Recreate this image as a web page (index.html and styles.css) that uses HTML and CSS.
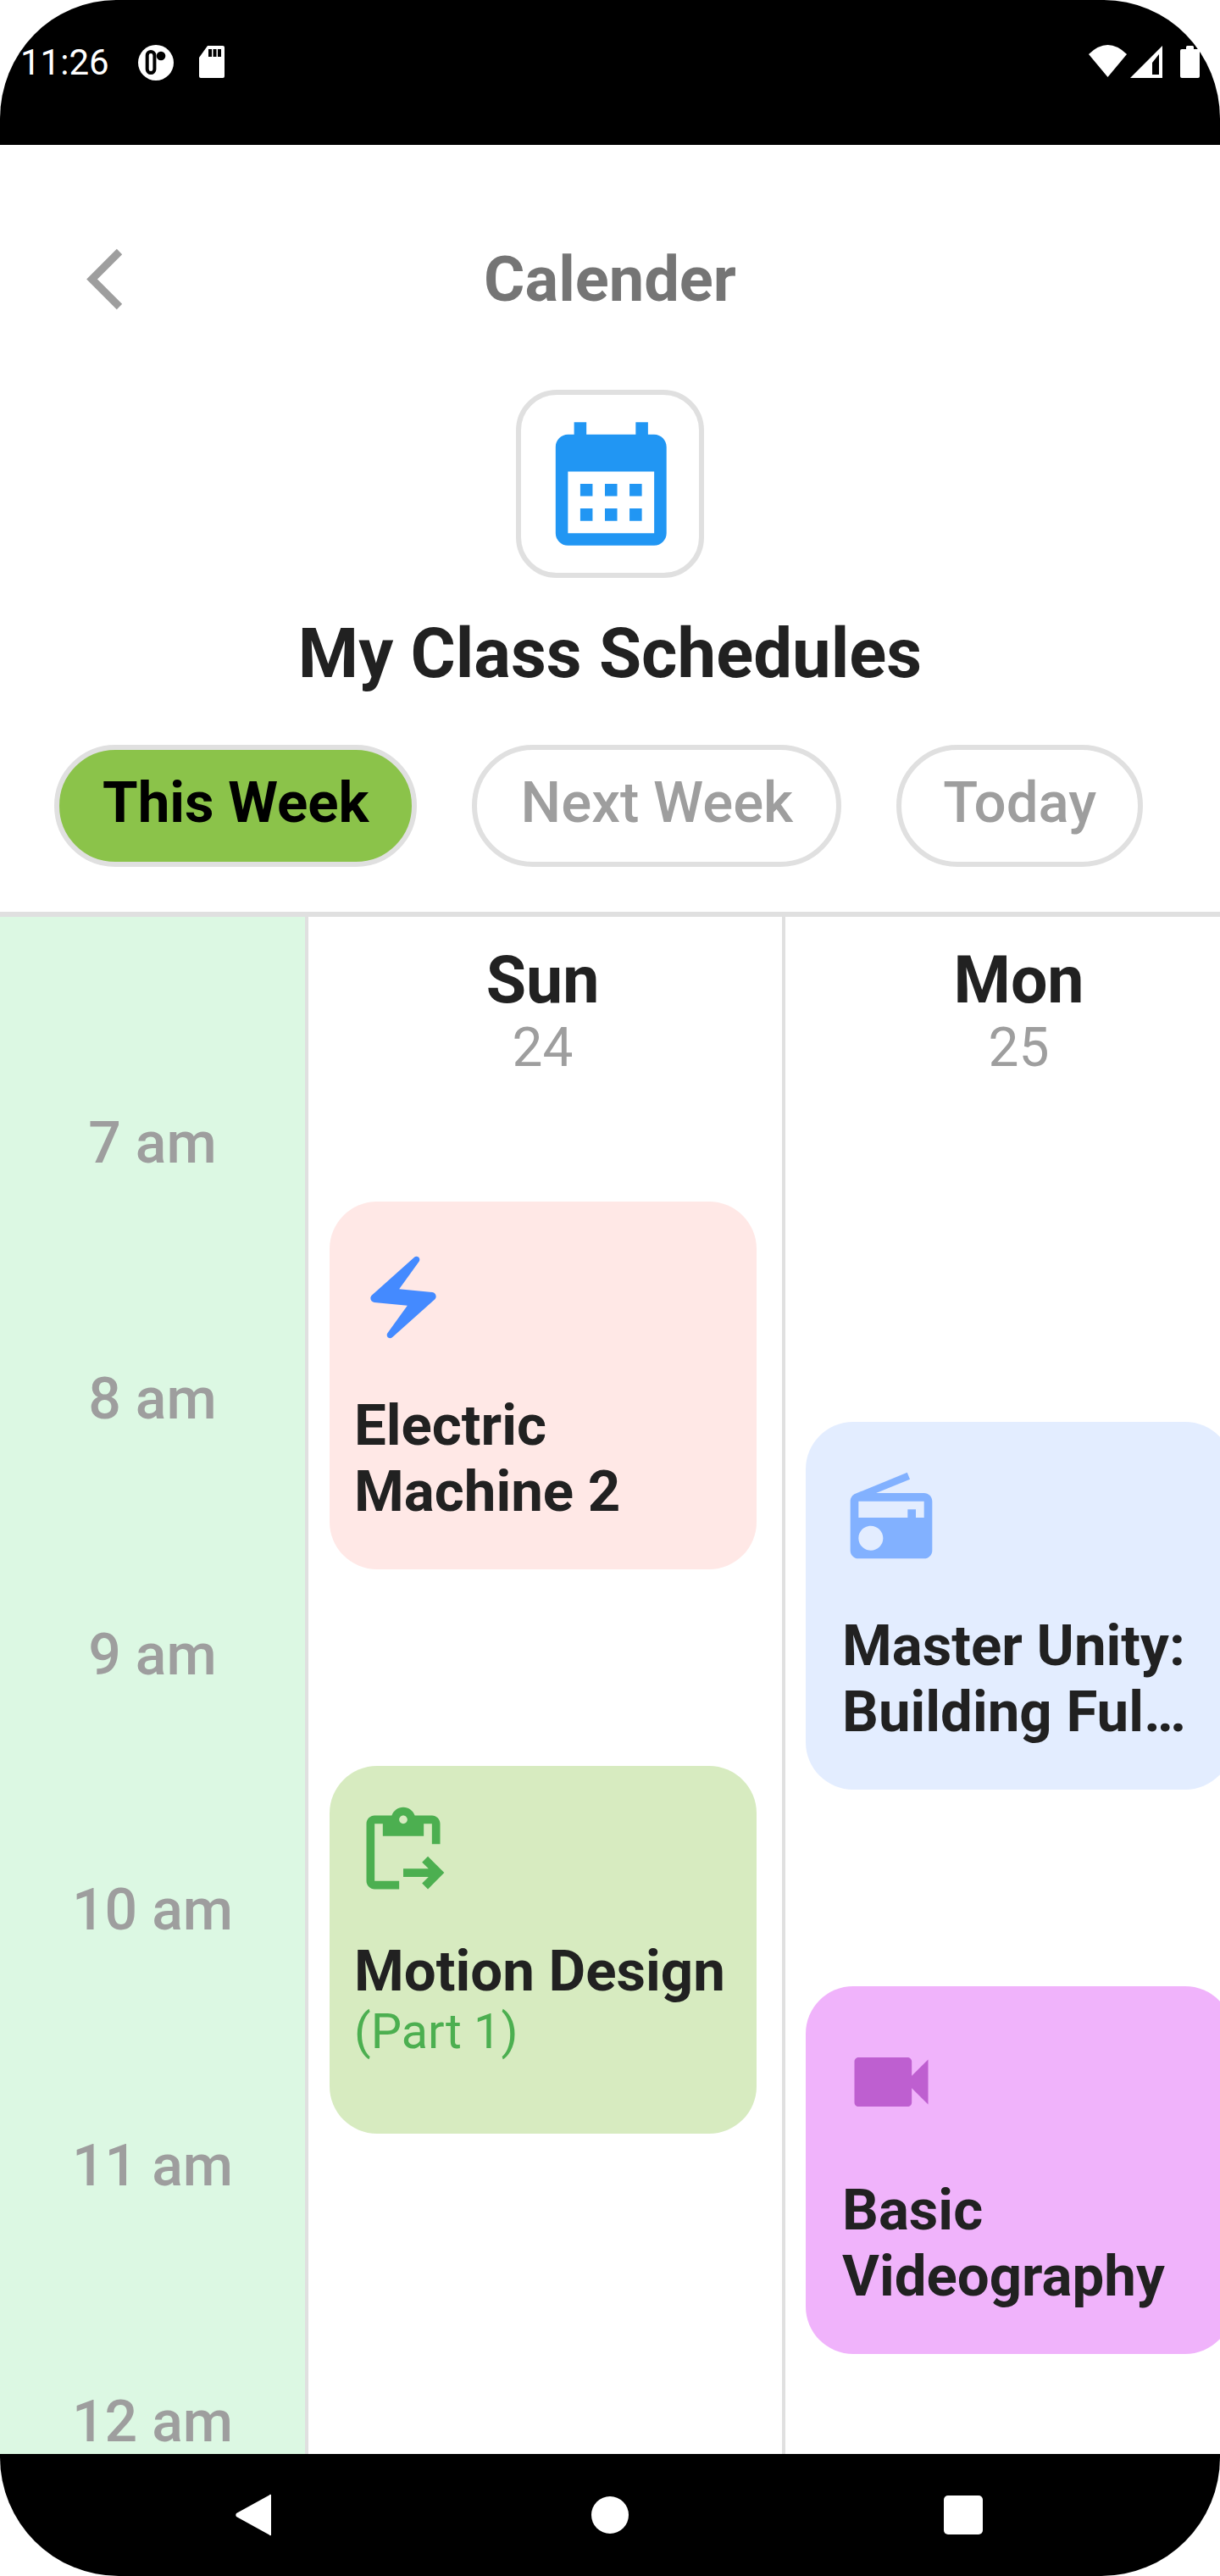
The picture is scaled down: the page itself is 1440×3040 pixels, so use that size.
FILE: index.html
```html
<!DOCTYPE html>
<html lang="en">

<head>
    <meta charset="UTF-8">
    <meta name="viewport" content="width=device-width, initial-scale=1.0">
    <title>Calender</title>
    <link rel="stylesheet" href="styles.css">
</head>

<body>

    <div class="phone">

        <!-- Status bar -->
        <div class="status-bar">
            <div class="status-left">
                <span class="clock">11:26</span>
                <svg class="status-cast" viewBox="0 0 42 42">
                    <circle cx="21" cy="21" r="21" fill="#fff" />
                    <rect x="10.700" y="8" width="8.700" height="25" rx="4.350" fill="none" stroke="#000" stroke-width="4" />
                    <circle cx="27" cy="13" r="5.300" fill="#000" />
                </svg>
                <svg class="status-sd" viewBox="0 0 30 38">
                    <path d="M10 0h18a2 2 0 0 1 2 2v34a2 2 0 0 1-2 2H2a2 2 0 0 1-2-2V14z" fill="#fff" />
                    <path d="M11 4h4v9h-4zM16.500 4h4v9h-4zM22 4h4v9h-4z" fill="#000" />
                </svg>
            </div>
            <div class="status-right">
                <svg class="status-wifi" viewBox="0 0 45 38">
                    <path d="M22.500 38 0 11Q22.500-11 45 11z" fill="#fff" />
                </svg>
                <svg class="status-signal" viewBox="0 0 38 38">
                    <path d="M38 0v38H0zM34 10 26 20v14h8z" fill="#fff" fill-rule="evenodd" />
                </svg>
                <svg class="status-battery" viewBox="0 0 23 38">
                    <path d="M7 4V1.500A1.500 1.500 0 0 1 8.500 0h6A1.500 1.500 0 0 1 16 1.500V4h5a2 2 0 0 1 2 2v30a2 2 0 0 1-2 2H2a2 2 0 0 1-2-2V6a2 2 0 0 1 2-2z" fill="#fff" />
                </svg>
            </div>
        </div>

        <div class="screen">

            <!-- Top bar -->
            <div class="top-bar">
                <svg class="back-icon" viewBox="0 0 56 84">
                    <path d="M45 9 12.500 41.500 45 74" fill="none" stroke="#9e9e9e" stroke-width="9" />
                </svg>
                <h1 class="page-title">Calender</h1>
            </div>

            <div class="icon-box">
                <svg class="icon-box-svg" viewBox="0 0 24 22">
                    <path fill="#2196f3" fill-rule="evenodd" d="M19 3h-1V1h-2v2H8V1H6v2H5c-1.100 0-2 .9-2 2v14c0 1.100.9 2 2 2h14c1.100 0 2-.9 2-2V5c0-1.100-.9-2-2-2zm0 16H5V9h14v10z" />
                    <path fill="#2196f3" d="M7 11h2v2H7zM11 11h2v2h-2zM15 11h2v2h-2zM7 15h2v2H7zM11 15h2v2h-2zM15 15h2v2h-2z" />
                </svg>
            </div>

            <h2 class="schedule-title">My Class Schedules</h2>

            <!-- Week filter -->
            <div class="tabs">
                <div class="tab tab-active">This Week</div>
                <div class="tab">Next Week</div>
                <div class="tab tab-short">Today</div>
            </div>

            <!-- Timetable -->
            <div class="timetable">
                <div class="times">
                    <div class="time">7 am</div>
                    <div class="time">8 am</div>
                    <div class="time">9 am</div>
                    <div class="time">10 am</div>
                    <div class="time">11 am</div>
                    <div class="time">12 am</div>
                </div>

                <div class="day">
                    <div class="day-head">
                        <div class="day-name">Sun</div>
                        <div class="day-date">24</div>
                    </div>
                    <div class="card card-pink">
                        <svg class="card-icon" viewBox="0 0 24 24">
                            <path fill="#448aff" d="M14.690 2.210 4.330 11.490c-.64.58-.28 1.650.58 1.730L13 14l-4.850 6.760c-.22.31-.19.740.08 1.010.3.3.78.3 1.080.01l10.360-9.280c.64-.58.28-1.650-.58-1.730L11 10l4.850-6.760c.22-.31.19-.74-.08-1.010-.3-.3-.78-.3-1.080-.01z" />
                        </svg>
                        <div class="card-title">Electric Machine 2</div>
                    </div>
                    <div class="card card-green card-gap">
                        <svg class="card-icon" viewBox="0 0 24 24">
                            <path fill="#4caf50" d="M5 5h2v3h10V5h2v5h2V5c0-1.100-.9-2-2-2h-4.180C14.400 1.840 13.300 1 12 1S9.600 1.840 9.180 3H5C3.900 3 3 3.900 3 5v14c0 1.100.9 2 2 2h6v-2H5V5zm7-2c.55 0 1 .45 1 1s-.45 1-1 1-1-.45-1-1 .45-1 1-1z" />
                            <path fill="#4caf50" d="M18.010 13l-1.420 1.410 1.580 1.580H12v2h6.170l-1.580 1.580 1.420 1.410 3.990-4z" />
                        </svg>
                        <div class="card-title">Motion Design</div>
                        <div class="card-sub">(Part 1)</div>
                    </div>
                </div>

                <div class="day day-last">
                    <div class="day-head">
                        <div class="day-name">Mon</div>
                        <div class="day-date">25</div>
                    </div>
                    <div class="card card-blue card-first-mon">
                        <svg class="card-icon" viewBox="0 0 24 24">
                            <path fill="#82b1ff" d="M3.240 6.150C2.510 6.430 2 7.170 2 8v12c0 1.100.89 2 2 2h16c1.110 0 2-.9 2-2V8c0-1.110-.89-2-2-2H8.300l8.260-3.340L15.880 1 3.240 6.150zM7 20c-1.660 0-3-1.340-3-3s1.340-3 3-3 3 1.340 3 3-1.340 3-3 3zm13-8h-2v-2h-2v2H4V8h16v4z" />
                        </svg>
                        <div class="card-title">Master Unity: Building Ful…</div>
                    </div>
                    <div class="card card-purple card-gap">
                        <svg class="card-icon" viewBox="0 0 24 24">
                            <path fill="#be5fd0" d="M17 10.500V7c0-.55-.45-1-1-1H4c-.55 0-1 .45-1 1v10c0 .55.45 1 1 1h12c.55 0 1-.45 1-1v-3.500l4 4v-11l-4 4z" />
                        </svg>
                        <div class="card-title">Basic Videography</div>
                    </div>
                </div>
            </div>
        </div>

        <!-- Navigation bar -->
        <div class="nav-bar">
            <svg class="nav-back" viewBox="0 0 42 50">
                <path d="M40 1.500a1 1 0 0 1 2 .5v46a1 1 0 0 1-2 .5L1 27a3.500 3.500 0 0 1 0-4z" fill="#fff" />
            </svg>
            <div class="nav-home"></div>
            <div class="nav-square"></div>
        </div>
    </div>

</body>

</html>
```
FILE: styles.css
```css
* {
    box-sizing: border-box;
}

body {
    margin: 0;
    background-color: #fff;
    font-family: Roboto, "Liberation Sans", sans-serif;
}

.phone {
    width: 1440px;
    height: 3040px;
    display: flex;
    flex-direction: column;
    overflow: hidden;
}

/* Status bar */
.status-bar {
    height: 171px;
    flex: none;
    background-color: #000;
    border-radius: 137px 137px 0 0 / 140px 140px 0 0;
    padding: 53px 24px 0 24px;
    display: flex;
    justify-content: space-between;
    align-items: flex-start;
}

.status-left,
.status-right {
    display: flex;
    align-items: flex-start;
}

.clock {
    color: #fff;
    font-size: 42px;
    line-height: 42px;
    width: 139px;
}

.status-cast {
    width: 42px;
    height: 42px;
}

.status-sd {
    width: 30px;
    height: 38px;
    margin-left: 30px;
    margin-top: 1px;
}

.status-wifi {
    width: 45px;
    height: 38px;
}

.status-signal {
    width: 38px;
    height: 38px;
    margin-left: 4px;
    margin-top: 1px;
}

.status-battery {
    width: 23px;
    height: 38px;
    margin-left: 21px;
    margin-top: 1px;
}

/* Screen */
.screen {
    flex: 1;
    min-height: 0;
    display: flex;
    flex-direction: column;
    align-items: center;
}

.top-bar {
    width: 100%;
    height: 84px;
    margin-top: 117px;
    position: relative;
    display: flex;
    justify-content: center;
    align-items: center;
}

.back-icon {
    position: absolute;
    left: 96px;
    top: 0;
    width: 56px;
    height: 84px;
}

.page-title {
    margin: 0;
    font-size: 74px;
    line-height: 84px;
    font-weight: 700;
    color: #757575;
}

.icon-box {
    width: 222px;
    height: 222px;
    margin-top: 88px;
    padding-left: 3px;
    border: 6px solid #e0e0e0;
    border-radius: 48px;
    display: flex;
    justify-content: center;
    align-items: center;
}

.icon-box-svg {
    width: 174.500px;
    height: 160px;
}

.schedule-title {
    margin: 42px 0 0;
    font-size: 81.500px;
    line-height: 94px;
    font-weight: 700;
    color: #212121;
}

.tabs {
    width: 100%;
    display: flex;
    gap: 65px;
    margin-top: 61px;
    padding: 0 0 53px 64px;
    border-bottom: 6px solid #e0e0e0;
}

.tab {
    height: 144px;
    padding: 0 51px;
    border: 6px solid #e0e0e0;
    border-radius: 72px;
    font-size: 67.200px;
    font-weight: 500;
    line-height: 124px;
    color: #9e9e9e;
}

.tab-short {
    padding: 0 49px;
}

.tab-active {
    background-color: #8bc34a;
    font-weight: 700;
    color: #000;
}

/* Timetable */
.timetable {
    width: 100%;
    flex: 1;
    min-height: 0;
    display: flex;
    overflow: hidden;
}

.times {
    flex: 0 0 364px;
    padding-top: 233px;
    background-color: #dcf8e3;
    border-right: 4px solid #e0e0e0;
    display: flex;
    flex-direction: column;
    gap: 233.800px;
}

.time {
    text-align: center;
    font-size: 68px;
    line-height: 68px;
    font-weight: 500;
    color: #9e9e9e;
}

.day {
    flex: 0 0 562px;
    padding: 0 30px 0 25px;
    border-right: 4px solid #e0e0e0;
}

.day-last {
    padding-left: 24px;
    border-right: none;
}

.day-head {
    width: 503px;
    height: 336px;
    padding-top: 33px;
    text-align: center;
}

.day-name {
    font-size: 77px;
    line-height: 84px;
    font-weight: 700;
    color: #212121;
}

.day-date {
    font-size: 64px;
    line-height: 76px;
    color: #9e9e9e;
}

.card {
    width: 504px;
    height: 434px;
    padding: 55px 29px 0;
    border-radius: 56px;
}

.day-last .card {
    padding: 55px 40px 0 43px;
}

.card-first-mon {
    margin-top: 260px;
}

.card-gap {
    margin-top: 232px;
}

.card-pink {
    background-color: #ffe8e6;
}

.card-green {
    background-color: #d7ebc0;
    padding-top: 44px;
}

.card-blue {
    background-color: #e3edff;
}

.card-purple {
    background-color: #f0b3fb;
}

.card-icon {
    display: block;
    width: 116px;
    height: 116px;
    margin-bottom: 54px;
}

.card-green .card-icon {
    margin-bottom: 43px;
}

.card-title {
    font-size: 67.200px;
    line-height: 78px;
    font-weight: 700;
    color: #212121;
}

.card-sub {
    font-size: 57.600px;
    line-height: 66px;
    color: #4caf50;
}

/* Navigation bar */
.nav-bar {
    height: 144px;
    flex: none;
    background-color: #000;
    border-radius: 0 0 140px 140px;
    display: flex;
    align-items: center;
    padding-left: 278px;
}

.nav-back {
    width: 42px;
    height: 50px;
}

.nav-home {
    width: 44px;
    height: 44px;
    margin-left: 378px;
    background-color: #fff;
    border-radius: 50%;
}

.nav-square {
    width: 46px;
    height: 46px;
    margin-left: 372px;
    background-color: #fff;
    border-radius: 5px;
}
```
